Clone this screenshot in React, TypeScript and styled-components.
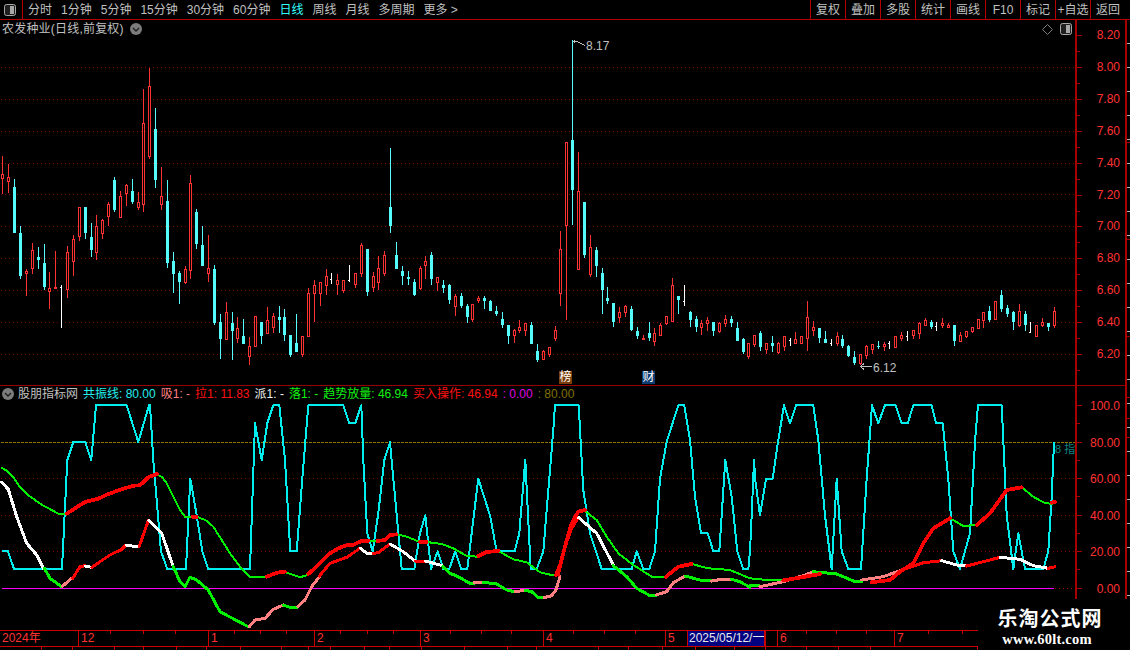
import React from 'react';
import styled, { createGlobalStyle } from 'styled-components';

const UI_FONT = '"Liberation Sans", "Noto Sans CJK SC", sans-serif';
const LINE_RED = '#b40000';
const LABEL_RED = '#ff3232';
const TEXT = '#c0c0c0';
const UP_RED = '#ff3232';
const DOWN_CYAN = '#54fcfc';

// candles traced off the chart at 3x: x, high, body top, body bottom, low, kind
type Candle = [number, number, number, number, number, 'r' | 'c' | 'w'];

const candlesLeft: Candle[] = [
  [7,288,343,358,402,'r'],[25,312,352,367,399,'r'],[43,357,381,518,518,'c'],[61,498,519,647,656,'c'],[79,628,634,643,708,'r'],
  [97,549,571,626,641,'r'],[115,561,591,600,627,'c'],[133,552,609,681,689,'c'],[148,636,685,697,747,'r'],[166,573,682,687,688,'r'],
  [184,675,681,683,803,'w'],[202,558,577,691,714,'r'],[220,526,538,605,648,'r'],[238,442,442,530,543,'r'],[256,441,441,518,537,'c'],
  [274,489,531,570,591,'c'],[289,465,499,578,600,'r'],[307,476,481,521,537,'r'],[325,426,433,472,498,'r'],[343,351,360,450,456,'c'],
  [361,394,409,473,473,'r'],[379,373,376,403,438,'r'],[397,357,393,426,432,'c'],[415,396,427,443,449,'r'],[430,87,190,434,456,'r'],
  [448,24,79,290,297,'r'],[466,144,207,359,384,'c'],[484,321,409,434,450,'r'],[502,360,423,608,624,'c'],[520,576,603,641,699,'c'],
  [538,633,639,665,732,'c'],[556,618,628,669,672,'r'],[571,346,370,634,657,'r'],[589,447,456,551,567,'c'],[607,498,555,617,617,'c'],
  [625,526,625,641,666,'r'],[643,615,627,789,795,'c'],[661,762,786,836,897,'c'],[679,726,757,839,839,'r'],[697,756,789,812,900,'c'],
  [712,771,805,836,849,'r'],[730,777,828,851,851,'c'],[748,831,859,892,915,'r'],[766,768,769,860,860,'r'],[784,786,786,827,852,'c'],
  [802,741,781,821,821,'r'],[820,759,769,803,819,'r'],[838,738,771,780,819,'c'],[853,747,771,824,842,'c'],[871,825,825,885,891,'c'],
  [889,762,849,876,876,'c'],
];

const candlesMid: Candle[] = [
  [7,618,618,674,681,'r'],[25,474,489,620,620,'r'],[43,450,465,491,576,'r'],[61,455,457,491,528,'r'],[79,417,438,467,495,'r'],
  [94,429,447,449,462,'w'],[112,432,450,465,495,'r'],[130,450,451,482,489,'r'],[148,405,450,453,456,'w'],[166,430,430,465,474,'r'],
  [184,339,345,431,441,'r'],[202,357,357,486,498,'c'],[220,426,438,473,486,'r'],[235,378,414,458,480,'r'],[253,363,375,431,438,'r'],
  [271,54,231,288,309,'c'],[289,336,375,417,417,'c'],[307,408,423,438,465,'c'],[325,423,441,447,465,'c'],[343,447,456,495,498,'c'],
  [361,408,414,477,481,'r'],[376,378,393,408,447,'r'],[394,366,375,447,465,'c'],[412,441,441,459,482,'r'],[430,450,465,474,489,'c'],
  [448,462,465,510,522,'c'],[466,492,498,530,558,'r'],[484,489,498,528,534,'c'],[502,522,528,561,579,'c'],[517,522,522,570,576,'r'],
  [535,498,504,513,519,'r'],[553,498,504,513,537,'c'],[571,510,513,543,543,'c'],[589,528,543,552,558,'c'],[607,546,567,585,594,'c'],
  [625,585,585,618,642,'c'],[643,597,600,618,639,'r'],[658,570,591,603,609,'r'],[676,579,579,603,618,'r'],[694,576,585,642,642,'c'],
  [712,642,663,690,696,'c'],[730,660,663,689,689,'r'],[748,651,652,674,681,'r'],[766,588,600,627,633,'r'],[781,303,357,491,528,'r'],
  [799,36,36,288,570,'r'],[817,-270,30,180,285,'c'],[835,66,183,420,420,'r'],[853,216,216,375,384,'c'],[871,315,351,435,441,'r'],
  [889,351,360,408,441,'c'],
];

const candlesRight: Candle[] = [
  [7,24,39,90,162,'c'],[22,81,114,123,132,'c'],[40,129,129,186,201,'c'],[58,141,156,174,189,'r'],[76,135,138,159,171,'r'],
  [94,138,147,210,213,'c'],[112,201,213,228,237,'c'],[130,225,234,240,240,'r'],[148,186,219,235,243,'c'],[163,204,219,246,258,'r'],
  [181,189,195,228,228,'r'],[199,168,168,192,195,'r'],[217,54,75,186,186,'r'],[235,108,108,120,162,'c'],[253,75,123,125,138,'w'],
  [271,153,156,180,201,'c'],[289,168,177,201,216,'c'],[304,180,189,204,225,'r'],[322,171,180,192,213,'r'],[340,186,186,213,228,'c'],
  [358,186,189,216,219,'r'],[376,165,177,192,201,'r'],[394,168,177,189,201,'c'],[412,186,204,243,243,'c'],[430,234,237,276,282,'c'],
  [445,249,249,291,297,'r'],[463,225,225,255,261,'r'],[481,213,219,261,273,'c'],[499,249,249,270,282,'r'],[517,228,249,258,276,'c'],
  [535,246,249,279,282,'r'],[553,228,228,261,273,'r'],[571,234,240,242,258,'w'],[586,216,237,252,252,'r'],[604,228,228,252,252,'r'],
  [622,123,171,237,273,'r'],[640,183,201,213,228,'r'],[658,204,204,234,249,'c'],[676,213,237,249,249,'c'],[694,237,250,252,258,'w'],
  [712,216,228,252,258,'r'],[727,225,237,258,264,'c'],[745,255,258,288,291,'c'],[763,273,291,309,315,'c'],[781,282,282,312,315,'r'],
  [799,255,258,288,297,'r'],[817,252,252,270,282,'r'],[835,243,258,261,267,'c'],[853,246,252,261,273,'r'],[868,243,250,252,267,'w'],
  [886,228,228,264,264,'r'],[904,216,225,237,243,'r'],[922,213,228,230,243,'w'],[940,210,210,228,237,'r'],[958,186,189,222,237,'r'],
  [976,174,180,198,198,'r'],[994,180,186,201,207,'c'],[1009,186,198,200,213,'w'],[1027,174,189,198,204,'r'],[1045,189,195,204,204,'r'],
  [1063,195,195,243,258,'c'],[1081,216,225,246,246,'r'],[1099,213,213,231,234,'r'],[1117,201,201,216,219,'r'],[1135,177,177,207,207,'r'],
  [1150,156,156,183,204,'r'],[1168,138,153,180,186,'c'],[1186,123,123,180,180,'r'],[1204,90,105,147,156,'c'],[1222,135,144,162,171,'c'],
  [1240,153,156,186,210,'c'],[1258,132,153,198,201,'r'],[1276,153,162,195,213,'c'],[1291,186,216,218,219,'w'],[1309,195,195,231,231,'r'],
  [1327,174,186,198,201,'r'],[1345,189,189,201,213,'c'],[1363,141,153,198,204,'r'],
];

const shift = (list: Candle[], ox: number, oy: number) =>
  list.map(([x, h, t, b, l, k]) => ({
    x: Math.round(x / 3 + ox - 0.5),
    high: Math.round(h / 3 + oy),
    top: Math.round(t / 3 + oy),
    bottom: Math.round(b / 3 + oy),
    low: Math.round(l / 3 + oy),
    kind: k,
  }));

const candles = [...shift(candlesLeft, 0, 60), ...shift(candlesMid, 300, 130), ...shift(candlesRight, 600, 260)];

// indicator lines, same 3x tracing, three pieces of the x range
const P1 = 0;
const P2 = 370;
const P3 = 750;
const pts = (ox: number, raw: string) =>
  raw.split(' ').map((p) => {
    const [x, y] = p.split(',').map(Number);
    return `${(x / 3 + ox).toFixed(1)},${(y / 3 + 400).toFixed(1)}`;
  }).join(' ');

const cyanLine = [
  pts(P1, '5,454 24,454 42,507 186,507 202,180 220,126 256,126 274,180 288,16 380,16 415,126 447,16 450,16 460,180 483,454 502,507 558,507 571,236 590,346 607,454 625,507 750,507 765,70 785,180 802,70 820,16 838,16 855,180 871,454 890,454 907,236 925,16 1030,16 1048,70 1066,70 1084,16 1090,180 1102,400 1118,454'),
  pts(P2, '25,340 43,180 60,127 75,290 95,507 133,507 150,400 166,346 183,507 203,454 220,507 238,507 256,454 274,507 292,507 325,236 360,346 380,454 434,454 448,400 466,180 482,507 500,507 520,454 550,90 555,16 626,16 640,270 660,400 695,507 785,507 800,454 820,507 838,507 855,454 870,236 890,125 925,16 943,16 960,120 975,290 993,400 1013,400 1030,454 1048,454 1066,180 1085,290 1102,454 1120,507 1135,507'),
  pts(P3, '0,454 5,346 12,180 16,240 30,346 48,236 68,236 85,120 102,16 120,70 138,16 190,16 205,120 225,346 245,507 260,236 275,454 295,507 333,507 350,236 366,16 385,70 405,16 437,16 455,70 473,70 490,16 545,16 558,70 578,70 595,236 610,454 630,507 660,400 675,125 684,16 755,16 770,346 790,507 805,400 825,507 880,507 895,454 905,290 912,127'),
].join(' ');

const GREEN = '#00f000';
const RED = '#ff0000';
const PINK = '#ff8080';
const WHITE = '#ffffff';

type Seg = [number, string, string]; // piece offset, colour, points

const upperThin: Seg[] = [
  [P1, GREEN, '5,203 20,212 40,232 60,262 80,282 105,300 130,317 155,330 175,341 195,341'],
  [P1, GREEN, '470,224 485,230 500,250 520,290 540,330 555,350 578,350'],
  [P1, GREEN, '595,352 620,362 640,380 665,420 690,460 720,500 750,530 800,530'],
  [P1, GREEN, '855,516 900,532 925,524'],
  [P1, GREEN, '1105,423 1130,423'],
  [P2, GREEN, '20,423 22,423'],
  [P2, GREEN, '80,403 110,410 150,426'],
  [P2, GREEN, '170,426 215,432 250,445 290,468 325,470'],
  [P2, GREEN, '385,453 430,478 470,487 510,517 545,525 558,525'],
  [P2, GREEN, '645,333 680,360 710,410 745,460 790,495 845,530 888,530'],
  [P2, GREEN, '965,492 1015,505 1080,510 1140,535'],
  [P3, GREEN, '0,535 50,540 100,541'],
  [P3, GREEN, '600,355 640,378 680,375'],
  [P3, GREEN, '815,262 850,290 880,307 905,312'],
];

const upperThick: Seg[] = [
  [P1, RED, '200,341 225,325 255,306 295,296 325,282 365,268 400,257 420,256 445,232 470,222'],
  [P1, RED, '578,351 590,351'],
  [P1, RED, '800,530 830,518 855,515'],
  [P1, RED, '925,522 955,495 990,460 1015,445 1040,436 1060,434 1085,423 1105,423'],
  [P2, RED, '22,423 45,420 60,405 80,403'],
  [P2, RED, '150,426 170,426'],
  [P2, RED, '325,468 350,456 385,453'],
  [P2, RED, '558,525 572,490 585,440 605,370 625,335 645,330'],
  [P2, RED, '888,530 925,500 965,492'],
  [P3, RED, '100,541 165,530 210,522'],
  [P3, RED, '365,547 420,540 450,515 490,490 520,430 550,385 600,355'],
  [P3, RED, '680,375 720,340 770,270 815,262'],
  [P3, RED, '905,308 915,305'],
];

const lower: Seg[] = [
  [P1, WHITE, '5,247 25,268 50,350 80,430 110,465 130,505'],
  [P1, GREEN, '133,505 150,535 185,560'],
  [P1, PINK, '188,558 215,535'],
  [P1, RED, '218,535 240,500 255,497'],
  [P1, WHITE, '255,498 275,502'],
  [P1, RED, '275,502 330,465 365,448 378,435'],
  [P1, WHITE, '378,435 415,441'],
  [P1, RED, '417,441 445,362'],
  [P1, WHITE, '447,362 485,400 520,500'],
  [P1, GREEN, '520,500 540,545 555,560 570,532 590,540 625,570 660,635 745,680'],
  [P1, PINK, '748,680 765,660 795,655 820,628 850,615'],
  [P1, GREEN, '850,615 870,622 890,622'],
  [P1, PINK, '893,620 915,600 935,560 958,530'],
  [P1, RED, '958,528 990,490 1040,472 1080,445'],
  [P1, WHITE, '1082,445 1100,460 1120,460'],
  [P2, RED, '10,460 25,458 60,432'],
  [P2, WHITE, '60,432 100,455 135,483'],
  [P2, RED, '135,483 165,483'],
  [P2, WHITE, '165,483 218,497'],
  [P2, GREEN, '218,500 240,520 260,528 300,550 312,550'],
  [P2, PINK, '312,548 340,547'],
  [P2, GREEN, '340,547 380,552 410,570 435,575'],
  [P2, PINK, '435,575 465,571'],
  [P2, GREEN, '465,571 485,575 505,593 522,593'],
  [P2, PINK, '522,593 545,587 558,570 570,530'],
  [P2, RED, '565,525 585,440 605,385 625,352'],
  [P2, WHITE, '625,352 680,400 730,495'],
  [P2, GREEN, '730,497 770,530 800,565 840,587 858,587'],
  [P2, PINK, '858,585 890,575 910,548 945,528'],
  [P2, GREEN, '945,528 990,540 1025,543'],
  [P2, PINK, '1025,543 1060,537 1085,537'],
  [P2, GREEN, '1085,538 1110,545 1140,562'],
  [P3, GREEN, '0,555 30,558'],
  [P3, PINK, '30,560 100,545 165,525 190,515'],
  [P3, GREEN, '190,515 260,522 310,543 335,545'],
  [P3, PINK, '335,540 400,530 455,510'],
  [P3, RED, '455,510 520,488 575,482'],
  [P3, WHITE, '575,482 620,495 650,498'],
  [P3, RED, '650,498 700,485 750,472'],
  [P3, WHITE, '750,472 810,478 850,497 895,505'],
  [P3, RED, '895,505 915,500'],
];

const priceGrid = [67.5, 99.5, 131.5, 163.5, 194.5, 226.5, 258.5, 290.5, 322.5, 354.5];
const priceLabels = ['8.20', '8.00', '7.80', '7.60', '7.40', '7.20', '7.00', '6.80', '6.60', '6.40', '6.20'];
const indicatorLabels: [string, number][] = [['100.0', 405.5], ['80.00', 442.5], ['60.00', 478.5], ['40.00', 515.5], ['20.00', 551.5], ['0.00', 588.5]];

const periods = ['分时', '1分钟', '5分钟', '15分钟', '30分钟', '60分钟', '日线', '周线', '月线', '多周期', '更多 >'];
const actions = ['复权', '叠加', '多股', '统计', '画线', 'F10', '标记', '+自选', '返回'];

const timeCells: { w: number; label: string }[] = [
  { w: 78, label: '2024年' }, { w: 130, label: '12' }, { w: 106, label: '1' }, { w: 106, label: '2' },
  { w: 123, label: '3' }, { w: 122, label: '4' }, { w: 22, label: '5' },
];
const timeTicks = [110, 143, 175, 234, 260, 286, 340, 367, 393, 450, 481, 511, 573, 604, 635, 806, 836, 866, 928, 962];
const stripStops = [42, 73, 115, 144, 177, 207, 241, 282, 309, 331, 365, 390, 422, 465, 508, 537, 599, 629, 663, 696, 735, 766, 807, 839, 871, 978];
const edgeRedMarks = [142, 239, 336, 397, 418, 437];

const GlobalStyle = createGlobalStyle`
  html, body {
    margin: 0;
    padding: 0;
    background: #000;
  }
`;

const Screen = styled.div`
  position: relative;
  width: 1130px;
  height: 650px;
  overflow: hidden;
  background: #000;
  color: ${TEXT};
  font-family: ${UI_FONT};
  font-size: 12px;
  line-height: 14px;
`;

const TopBar = styled.div`
  display: flex;
  align-items: stretch;
  height: 20px;
  box-sizing: border-box;
  border-bottom: 1px solid ${LINE_RED};
`;

const LayoutBox = styled.div`
  width: 23px;
  box-sizing: border-box;
  border-right: 1px solid ${LINE_RED};
  display: flex;
  align-items: center;
  padding-left: 4px;
`;

const Periods = styled.div`
  display: flex;
  align-items: center;
  gap: 9px;
  padding-left: 5px;
`;

const Period = styled.span<{ $active?: boolean }>`
  color: ${(p) => (p.$active ? '#33ffff' : TEXT)};
  white-space: nowrap;
`;

const Actions = styled.div`
  display: flex;
  margin-left: auto;
  width: 320px;
`;

const ActionButton = styled.div`
  flex: 0 0 35px;
  box-sizing: border-box;
  border-left: 1px solid ${LINE_RED};
  display: flex;
  align-items: center;
  justify-content: center;
  white-space: nowrap;
  &:last-child {
    flex: 1;
    padding-right: 5px;
  }
`;

const PanelRow = styled.div<{ $h: number }>`
  display: flex;
  height: ${(p) => p.$h}px;
  box-sizing: border-box;
`;

const KlineRow = styled(PanelRow)`
  border-bottom: 1px solid #980000;
`;

const ChartColumn = styled.div`
  position: relative;
  width: 1075px;
  display: flex;
  flex-direction: column;
`;

const PanelHead = styled.div<{ $h: number }>`
  display: flex;
  align-items: center;
  height: ${(p) => p.$h}px;
  flex: none;
  padding-left: 2px;
  white-space: nowrap;
`;

const StockTitle = styled.span`
  margin-right: 6px;
  letter-spacing: 0.2px;
`;

const HeadTools = styled.div`
  margin-left: auto;
  margin-right: 3px;
  display: flex;
  align-items: center;
  gap: 7px;
`;

const ChartSvg = styled.svg`
  display: block;
  flex: 1;
  width: 1075px;
`;

const Axis = styled.div`
  position: relative;
  flex: 1;
  margin-right: 3px;
  border-left: 2px solid #a80000;
  border-right: 2px solid #a80000;
`;

const AxisLabel = styled.span`
  position: absolute;
  right: 5px;
  color: ${LABEL_RED};
  transform: translateY(-50%);
`;

const AxisTick = styled.i<{ $major?: boolean }>`
  position: absolute;
  left: 0;
  width: ${(p) => (p.$major ? 5 : 3)}px;
  height: 1px;
  background: #a80000;
`;

const EdgeRuler = styled.div`
  position: absolute;
  right: 0;
  top: 20px;
  width: 3px;
  height: 580px;
  background: repeating-linear-gradient(to bottom, #000 0, #000 23px, #b8b8b8 23px, #b8b8b8 24px);
`;

const EdgeMark = styled.i`
  position: absolute;
  left: 0;
  width: 3px;
  height: 1px;
  background: #a80000;
`;

const PriceNote = styled.span`
  position: absolute;
  color: ${TEXT};
`;

const NoteHigh = styled(PriceNote)`
  left: 586px;
  top: 19px;
`;

const NoteLow = styled(PriceNote)`
  left: 873px;
  top: 341px;
`;

const Badge = styled.span<{ $bg: string; $left: number }>`
  position: absolute;
  left: ${(p) => p.$left}px;
  top: 351px;
  width: 13px;
  height: 13px;
  background: ${(p) => p.$bg};
  color: #fff;
  font-size: 12px;
  line-height: 13px;
  text-align: center;
`;

const Legend = styled.div`
  display: flex;
  gap: 5px;
  margin-left: 4px;
`;

const LegendItem = styled.span<{ $c: string }>`
  color: ${(p) => p.$c};
  white-space: nowrap;
`;

const SideTag = styled.span`
  position: absolute;
  left: 1055px;
  top: 56px;
  color: #0c8484;
  font-size: 11px;
  white-space: nowrap;
`;

const Timeline = styled.div`
  position: relative;
  display: flex;
  width: 978px;
  height: 17px;
  box-sizing: border-box;
  border-top: 1px solid #c80000;
  border-bottom: 1px solid #c80000;
  color: ${LABEL_RED};
`;

const TimeCell = styled.div<{ $w?: number }>`
  box-sizing: border-box;
  ${(p) => (p.$w ? `width: ${p.$w}px;` : 'flex: 1;')}
  padding-left: 2px;
  border-left: 1px solid #c80000;
  line-height: 15px;
  &:first-child {
    border-left: 0;
  }
`;

const DateCursor = styled(TimeCell)`
  padding: 0 0 0 1px;
  background: #000080;
  color: #e8e8e8;
  border-right: 1px solid #c80000;
  white-space: nowrap;
`;

const TimeTick = styled.i`
  position: absolute;
  top: 0;
  width: 1px;
  height: 3px;
  background: #c80000;
`;

const BottomStrip = styled.div`
  display: flex;
  height: 3px;
  width: 978px;
`;

const StripCell = styled.div`
  box-sizing: border-box;
  border-right: 1px solid #c80000;
`;

const Watermark = styled.div`
  position: absolute;
  right: 0;
  bottom: 0;
  width: 152px;
  height: 51px;
  background: #000;
  display: flex;
  flex-direction: column;
  align-items: center;
  color: #fff;
  padding: 9px 8px 0 0;
  box-sizing: border-box;
  font-weight: 700;
`;

const WatermarkName = styled.div`
  font-size: 20px;
  line-height: 23px;
  letter-spacing: 1px;
`;

const WatermarkUrl = styled.div`
  font-family: "Liberation Serif", serif;
  font-size: 14.5px;
  line-height: 16px;
  letter-spacing: 0.2px;
  margin-right: 6px;
`;

function PaneIcon() {
  return (
    <svg width="12" height="12" viewBox="0 0 12 12">
      <rect x="0.5" y="0.5" width="11" height="11" rx="2" fill="#202020" stroke="#a8a8a8" />
      <rect x="6" y="2" width="4" height="8" fill="#a8a8a8" />
    </svg>
  );
}

function ChevronIcon() {
  return (
    <svg width="12" height="12" viewBox="0 0 12 12">
      <circle cx="6" cy="6" r="6" fill="#7c7c7c" />
      <path d="M3 5 L6 8 L9 5" fill="none" stroke="#1c1c1c" strokeWidth="1.3" />
    </svg>
  );
}

function DiamondIcon() {
  return (
    <svg width="11" height="11" viewBox="0 0 11 11">
      <path d="M5.5 0.5 L10.5 5.5 L5.5 10.5 L0.5 5.5 Z" fill="none" stroke="#7c7c7c" />
    </svg>
  );
}

function CandleMark({ c }: { c: (typeof candles)[number] }) {
  const colour = c.kind === 'r' ? UP_RED : c.kind === 'c' ? DOWN_CYAN : '#ffffff';
  const h = Math.max(c.bottom - c.top, 1);
  return (
    <g>
      <rect x={c.x} y={c.high} width={1} height={Math.max(c.low - c.high, 1)} fill={colour} />
      {c.kind === 'r' && <rect x={c.x - 0.5} y={c.top + 0.5} width={2} height={Math.max(h - 1, 1)} fill="#000" stroke={colour} />}
      {c.kind === 'c' && <rect x={c.x - 1} y={c.top} width={3} height={h} fill={colour} />}
      {c.kind === 'w' && <rect x={c.x - 1} y={c.top} width={1} height={1} fill={colour} />}
    </g>
  );
}

function KlineChart() {
  return (
    <ChartSvg viewBox="0 38 1075 347" shapeRendering="crispEdges">
      {priceGrid.map((y) => (
        <line key={y} x1="1" x2="1075" y1={y} y2={y} stroke="#800000" strokeDasharray="1 3" />
      ))}
      {candles.map((c, i) => (
        <CandleMark key={i} c={c} />
      ))}
      <path d="M573 41.5 H577 M577 41.5 L585 45.5 M574 40 V43" fill="none" stroke={TEXT} />
      <path d="M860.5 366.5 H872 M860.5 366.5 L864 363.5 M860.5 366.5 L864 369.5" fill="none" stroke={TEXT} />
    </ChartSvg>
  );
}

function SegLines({ segs, width }: { segs: Seg[]; width: number }) {
  return (
    <>
      {segs.map(([ox, colour, raw], i) => (
        <polyline key={i} points={pts(ox, raw)} fill="none" stroke={colour} strokeWidth={width} strokeLinejoin="round" strokeLinecap="round" />
      ))}
    </>
  );
}

function IndicatorChart() {
  return (
    <ChartSvg viewBox="0 402 1075 228" shapeRendering="crispEdges">
      {[478.5, 515.5, 551.5].map((y) => (
        <line key={y} x1="1" x2="1075" y1={y} y2={y} stroke="#800000" strokeDasharray="1 3" />
      ))}
      <line x1="1" x2="1075" y1="442.5" y2="442.5" stroke="#907400" strokeDasharray="3 1" />
      <line x1="1055" x2="1075" y1="588.5" y2="588.5" stroke="#a00000" strokeDasharray="1 3" />
      <line x1="2" x2="1054" y1="588.5" y2="588.5" stroke="#ff00ff" />
      <polyline points={cyanLine} fill="none" stroke="#00eeee" strokeWidth="2" strokeLinejoin="round" />
      <SegLines segs={upperThin} width={2} />
      <SegLines segs={lower} width={3} />
      <SegLines segs={upperThick} width={3.8} />
    </ChartSvg>
  );
}

export default function App() {
  const stripCells = stripStops.map((x, i) => x - (i ? stripStops[i - 1] : 0));
  return (
    <Screen>
      <GlobalStyle />
      <TopBar>
        <LayoutBox>
          <PaneIcon />
        </LayoutBox>
        <Periods>
          {periods.map((p) => (
            <Period key={p} $active={p === '日线'}>{p}</Period>
          ))}
        </Periods>
        <Actions>
          {actions.map((a) => (
            <ActionButton key={a}>{a}</ActionButton>
          ))}
        </Actions>
      </TopBar>

      <KlineRow $h={366}>
        <ChartColumn>
          <PanelHead $h={18}>
            <StockTitle>农发种业(日线,前复权)</StockTitle>
            <ChevronIcon />
            <HeadTools>
              <DiamondIcon />
              <PaneIcon />
            </HeadTools>
          </PanelHead>
          <KlineChart />
          <NoteHigh>8.17</NoteHigh>
          <NoteLow>6.12</NoteLow>
          <Badge $bg="#7a3c08" $left={559}>榜</Badge>
          <Badge $bg="#0c3c70" $left={642}>财</Badge>
        </ChartColumn>
        <Axis>
          {priceLabels.map((label, i) => (
            <AxisLabel key={label} style={{ top: 15 + i * 31.9 }}>{label}</AxisLabel>
          ))}
          {priceLabels.flatMap((label, i) => [
            <AxisTick key={label} $major style={{ top: 15 + Math.round(i * 31.9) }} />,
            <AxisTick key={label + 'm'} style={{ top: 31 + Math.round(i * 31.9) }} />,
          ])}
        </Axis>
      </KlineRow>

      <PanelRow $h={244}>
        <ChartColumn>
          <PanelHead $h={16}>
            <ChevronIcon />
            <Legend>
              <LegendItem $c={TEXT}>股朋指标网</LegendItem>
              <LegendItem $c="#22eeee">共振线: 80.00</LegendItem>
              <LegendItem $c={PINK}>吸1: -</LegendItem>
              <LegendItem $c="#ff1010">拉1: 11.83</LegendItem>
              <LegendItem $c="#f0f0f0">派1: -</LegendItem>
              <LegendItem $c="#10f010">落1: -</LegendItem>
              <LegendItem $c="#10f010">趋势放量: 46.94</LegendItem>
              <LegendItem $c="#ff1010">买入操作: 46.94</LegendItem>
              <LegendItem $c="#e000e0">: 0.00</LegendItem>
              <LegendItem $c="#807000">: 80.00</LegendItem>
            </Legend>
          </PanelHead>
          <IndicatorChart />
          <SideTag>8 指</SideTag>
        </ChartColumn>
        <Axis>
          {indicatorLabels.map(([label, y]) => (
            <AxisLabel key={label} style={{ top: y - 386 }}>{label}</AxisLabel>
          ))}
          {indicatorLabels.map(([label, y], i) => (
            <React.Fragment key={label}>
              <AxisTick $major style={{ top: y - 386.5 }} />
              {i < 5 && <AxisTick style={{ top: y - 386.5 + 18 }} />}
            </React.Fragment>
          ))}
        </Axis>
      </PanelRow>

      <Timeline>
        {timeCells.map((c) => (
          <TimeCell key={c.label} $w={c.w}>{c.label}</TimeCell>
        ))}
        <DateCursor $w={78}>2025/05/12/一</DateCursor>
        <TimeCell $w={12} />
        <TimeCell $w={117}>6</TimeCell>
        <TimeCell>7</TimeCell>
        {timeTicks.map((x) => (
          <TimeTick key={x} style={{ left: x }} />
        ))}
      </Timeline>

      <BottomStrip>
        {stripCells.map((w, i) => (
          <StripCell key={i} style={{ width: w }} />
        ))}
      </BottomStrip>

      <EdgeRuler>
        {edgeRedMarks.map((y) => (
          <EdgeMark key={y} style={{ top: y - 20 }} />
        ))}
      </EdgeRuler>

      <Watermark>
        <WatermarkName>乐淘公式网</WatermarkName>
        <WatermarkUrl>www.60lt.com</WatermarkUrl>
      </Watermark>
    </Screen>
  );
}
